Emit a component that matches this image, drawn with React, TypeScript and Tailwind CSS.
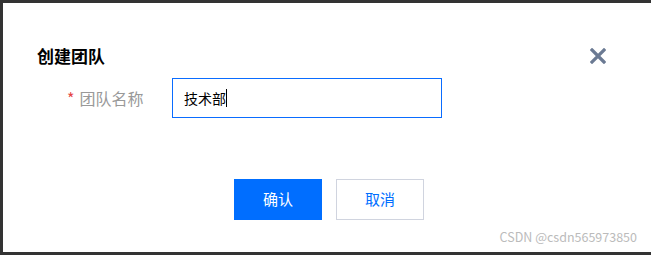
export default function App() {
  return (
    <div
      className="w-[651px] h-[255px] bg-[#333333] pt-[3px] pl-[3px] pb-[3px] overflow-hidden"
      style={{ fontFamily: '"Noto Sans CJK SC", "Noto Sans", sans-serif' }}
    >
      <div className="relative w-full h-[249px] bg-white flex flex-col pt-[41px] pl-[34px] pr-[45px]">
        <div className="flex items-center justify-between h-6">
          <h2 className="text-[17px] font-bold text-black leading-6">创建团队</h2>
          <svg width="16" height="16" viewBox="0 0 16 16" className="text-[#6b7a93]">
            <path d="M2 2 L14 14 M14 2 L2 14" stroke="currentColor" strokeWidth="3.2" strokeLinecap="square" />
          </svg>
        </div>

        <div className="flex items-center mt-[10px]">
          <label className="w-[135px] pl-[30px] text-[16px] text-[#999] flex items-center">
            <span className="text-[#e54545] mr-[5px]">*</span>
            团队名称
          </label>
          <div className="w-[270px] h-[40px] border border-[#0a6cff] flex items-center pl-[11px] text-[14px] text-black">
            技术部<span className="inline-block w-px h-[18px] bg-black" />
          </div>
        </div>

        <div className="flex justify-center gap-[14px] mt-[61px] pl-[15px]">
          <button className="w-[88px] h-[41px] bg-[#006eff] text-white text-[15px]">确认</button>
          <button className="w-[88px] h-[41px] border border-[#d0d4df] bg-white text-[#006eff] text-[15px]">取消</button>
        </div>

        <div className="absolute right-[14px] bottom-[7px] text-[12.5px] text-[#bbbbbb] leading-4">
          CSDN @csdn565973850
        </div>
      </div>
    </div>
  )
}
